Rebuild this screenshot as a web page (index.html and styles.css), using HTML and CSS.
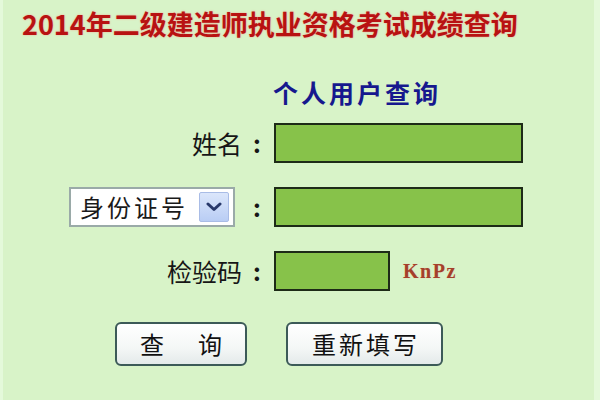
FILE: index.html
```html
<!DOCTYPE html>
<html lang="zh-CN">
<head>
<meta charset="utf-8">
<title>2014年二级建造师执业资格考试成绩查询</title>
<link rel="stylesheet" href="styles.css">
</head>
<body>
<div class="panel">
  <h1 class="title">2014年二级建造师执业资格考试成绩查询</h1>
  <form class="form">
    <div class="subtitle">个人用户查询</div>

    <div class="label"><span>姓名</span><span class="colon">:</span></div>
    <div class="field"><span class="input wide"></span></div>

    <div class="label">
      <div class="select">
        <span class="select-text">身份证号</span>
        <span class="select-arrow">
          <svg width="16" height="10" viewBox="0 0 16 10"><path d="M2 2 L8 7.5 L14 2" fill="none" stroke="#28386a" stroke-width="3" stroke-linecap="round" stroke-linejoin="round"/></svg>
        </span>
      </div>
      <span class="colon">:</span>
    </div>
    <div class="field"><span class="input wide"></span></div>

    <div class="label"><span>检验码</span><span class="colon">:</span></div>
    <div class="field"><span class="input short"></span><span class="captcha">KnPz</span></div>
  </form>
  <div class="buttons">
    <button type="button" class="btn btn-query">查　询</button>
    <button type="button" class="btn btn-reset">重新填写</button>
  </div>
</div>
</body>
</html>
```
FILE: styles.css
```css
html, body {
  margin: 0;
  padding: 0;
}
body {
  width: 600px;
  height: 400px;
  background: #e4f9da;
  font-family: "Noto Sans CJK SC", "Noto Sans", sans-serif;
  color: #1a1a1a;
  overflow: hidden;
}
.panel {
  margin: 0 6px 0 3px;
  height: 400px;
  background: #d8f3c8;
  box-sizing: border-box;
  padding-top: 10px;
}
.title {
  margin: 0;
  padding-left: 19px;
  font-size: 27px;
  line-height: 27px;
  font-weight: bold;
  color: #b81212;
  text-shadow: 0 0 2px #f4a090;
  letter-spacing: 0;
}
.form {
  margin: 43px 0 0 0;
  display: grid;
  grid-template-columns: 259px 1fr;
  column-gap: 12px;
  row-gap: 24px;
  align-items: center;
}
.subtitle {
  grid-column: 2;
  margin-left: -1px;
  margin-bottom: -6px;
  font-size: 25px;
  line-height: 25px;
  font-weight: bold;
  letter-spacing: 3px;
  color: #16188e;
}
.label {
  display: flex;
  justify-content: flex-end;
  align-items: center;
  gap: 10px;
  font-size: 25px;
  line-height: 40px;
  height: 40px;
  color: #161616;
}
.colon {
  width: 10px;
  text-align: center;
  font-weight: bold;
  font-size: 24px;
}
.field {
  display: flex;
  align-items: center;
  gap: 13px;
  height: 40px;
}
.input {
  display: block;
  height: 40px;
  box-sizing: border-box;
  border: 2px solid #1d2a17;
  background: #87c24a;
}
.input.wide {
  width: 249px;
}
.input.short {
  width: 116px;
}
.captcha {
  font-family: "Liberation Serif", serif;
  font-size: 20px;
  font-weight: bold;
  letter-spacing: 1.5px;
  color: #a3402b;
  text-shadow: 0 0 1px #f0b8a0;
}
.select {
  display: flex;
  align-items: center;
  justify-content: space-between;
  width: 166px;
  height: 40px;
  box-sizing: border-box;
  border: 2px solid #9aaaa8;
  background: #ffffff;
  padding: 0 4px 0 9px;
  margin-right: 7px;
}
.select-text {
  font-size: 24px;
  letter-spacing: 3px;
  line-height: 30px;
  color: #1a1a1a;
}
.select-arrow {
  display: flex;
  align-items: center;
  justify-content: center;
  width: 30px;
  height: 30px;
  box-sizing: border-box;
  border: 1px solid #a9bce6;
  border-radius: 2px;
  background: linear-gradient(#dbe6fb, #b9cdf4);
}
.select-arrow svg {
  display: block;
}
.buttons {
  display: flex;
  gap: 39px;
  margin-top: 31px;
  padding-left: 112px;
}
.btn {
  height: 44px;
  box-sizing: border-box;
  border: 2px solid #3c5a58;
  border-radius: 6px;
  background: linear-gradient(#ffffff, #f4f7f6 60%, #e4eaea);
  font-family: "Noto Sans CJK SC", "Noto Sans", sans-serif;
  font-size: 24px;
  line-height: 38px;
  color: #111111;
  padding: 0;
  cursor: pointer;
}
.btn-query {
  width: 132px;
  letter-spacing: 5px;
  padding-left: 5px;
}
.btn-reset {
  width: 157px;
  letter-spacing: 3px;
  padding-left: 3px;
}
```
